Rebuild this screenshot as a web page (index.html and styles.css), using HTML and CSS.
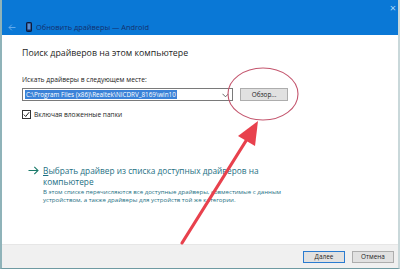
FILE: index.html
```html
<!DOCTYPE html>
<html lang="ru">
<head>
    <meta charset="UTF-8">
    <meta name="viewport" content="width=device-width, initial-scale=1.0">
    <title>Обновить драйверы — Android</title>
    <link rel="stylesheet" href="styles.css">
</head>
<body>
    <div class="window">
        <div class="titlebar">
            <svg class="back-arrow" width="8" height="7" viewBox="0 0 8 7">
                <path d="M7.5 3.5 H1 M3.8 0.7 L1 3.5 L3.8 6.3" fill="none" stroke="#6fb1ee" stroke-width="0.9"/>
            </svg>
            <svg class="device-icon" width="6" height="10" viewBox="0 0 6 10">
                <rect x="0.5" y="0.5" width="5" height="9" rx="0.8" fill="#1c2f5e" stroke="#0d1a3a" stroke-width="1"/>
                <rect x="1.5" y="1.5" width="3" height="6" fill="#5c8fd0"/>
            </svg>
            <span class="title-text">Обновить драйверы — Android</span>
            <span class="close-btn">&#215;</span>
        </div>

        <div class="content">
            <h1 class="page-title">Поиск драйверов на этом компьютере</h1>
            <div class="field-label">Искать драйверы в следующем месте:</div>
            <div class="path-row">
                <div class="path-input">
                    <span class="path-text">C:\Program Files (x86)\Realtek\NICDRV_8169\win10</span>
                    <svg class="combo-arrow" width="7" height="5" viewBox="0 0 7 5">
                        <path d="M0.5 0.8 L3.5 3.8 L6.5 0.8" fill="none" stroke="#555" stroke-width="0.9"/>
                    </svg>
                </div>
                <button class="btn browse-btn">Обзор...</button>
            </div>
            <label class="check-row">
                <span class="checkbox">
                    <svg width="7" height="7" viewBox="0 0 7 7">
                        <path d="M0.8 3.6 L2.7 5.5 L6.2 1.2" fill="none" stroke="#222" stroke-width="1"/>
                    </svg>
                </span>
                Включая вложенные папки
            </label>

            <div class="command-link">
                <svg class="link-arrow" width="11" height="9" viewBox="0 0 11 9">
                    <path d="M0.5 4.5 H10 M6.3 0.8 L10 4.5 L6.3 8.2" fill="none" stroke="#1b7a6a" stroke-width="1.1"/>
                </svg>
                <div class="link-body">
                    <div class="link-title"><u>В</u>ыбрать драйвер из списка доступных драйверов на компьютере</div>
                    <div class="link-desc">В этом списке перечисляются все доступные драйверы, совместимые с данным устройством, а также драйверы для устройств той же категории.</div>
                </div>
            </div>
        </div>

        <div class="footer">
            <button class="btn default-btn"><u>Д</u>алее</button>
            <button class="btn">Отмена</button>
        </div>

        <svg class="annotation" width="400" height="269" viewBox="0 0 400 269">
            <ellipse cx="263" cy="94" rx="35" ry="26" fill="none" stroke="#c4566e" stroke-width="1.1"/>
            <line x1="182" y1="243" x2="249" y2="136" stroke="#e8414d" stroke-width="3.2" stroke-linecap="round"/>
            <polygon points="258,121 238,136 255,146" fill="#e8414d"/>
        </svg>
    </div>
</body>
</html>
```

FILE: styles.css
```css
* {
    box-sizing: border-box;
}

body {
    margin: 0;
    font-family: "Open Sans", "Noto Sans", Arial, sans-serif;
    background: #fff;
}

.window {
    position: relative;
    width: 400px;
    height: 269px;
    display: flex;
    flex-direction: column;
    border-left: 2px solid #8fb3b9;
    border-right: 2px solid #c9d8da;
    border-bottom: 1px solid #6f9aa2;
    overflow: hidden;
}

.titlebar {
    height: 35px;
    background: #0a78d6;
    display: flex;
    align-items: center;
    padding: 19px 6px 0 6px;
    margin: 0 -2px 0 -2px;
    position: relative;
}

.back-arrow {
    margin-left: 2px;
    margin-right: 8px;
}

.device-icon {
    margin-left: 2px;
    margin-right: 4px;
}

.title-text {
    color: #13306e;
    font-size: 7.4px;
}

.close-btn {
    position: absolute;
    right: 4px;
    top: 0;
    color: #a9d6f7;
    font-size: 11px;
    line-height: 16px;
}

.content {
    flex: 1;
    padding: 11px 0 0 20px;
}

.page-title {
    margin: 0;
    font-size: 8.8px;
    font-weight: normal;
    line-height: 14px;
    color: #1e1e1e;
}

.field-label {
    margin-top: 15px;
    font-size: 6.7px;
    line-height: 10px;
    color: #222;
}

.path-row {
    display: flex;
    align-items: center;
    margin-top: 3px;
    gap: 7px;
}

.path-input {
    width: 211px;
    height: 13px;
    border: 1px solid #7a7a7a;
    display: flex;
    align-items: center;
    justify-content: space-between;
    padding: 0 3px 0 2px;
    background: #fff;
}

.path-text {
    background: #3b82d8;
    color: #fff;
    font-size: 6.3px;
    line-height: 9px;
    padding: 0 1px;
    white-space: nowrap;
}

.combo-arrow {
    margin-top: 1px;
}

.btn {
    font-family: inherit;
    font-size: 6.4px;
    color: #222;
    background: #e1e1e1;
    border: 1px solid #adadad;
    height: 12px;
    padding: 0;
    line-height: 10px;
    width: 42px;
}

.browse-btn {
    width: 48px;
    height: 13px;
}

.check-row {
    display: flex;
    align-items: center;
    margin-top: 9px;
    font-size: 6.6px;
    line-height: 9px;
    color: #222;
    gap: 3px;
}

.checkbox {
    width: 9px;
    height: 9px;
    border: 1px solid #333;
    display: flex;
    align-items: center;
    justify-content: center;
    background: #fff;
}

.command-link {
    display: flex;
    align-items: flex-start;
    margin-top: 46px;
    padding-left: 6px;
    gap: 4px;
}

.link-arrow {
    margin-top: 1px;
}

.link-title {
    color: #1d6f83;
    font-size: 8.3px;
    line-height: 11px;
    width: 228px;
}

.link-desc {
    color: #1d6f83;
    font-size: 6.1px;
    line-height: 8px;
    margin-top: 1px;
    width: 240px;
}

.footer {
    height: 24px;
    background: #f0f0f0;
    border-top: 1px solid #e6e6e6;
    display: flex;
    justify-content: flex-end;
    align-items: center;
    gap: 7px;
    padding-right: 4px;
}

.default-btn {
    border: 1px solid #2a7bd0;
}

.annotation {
    position: absolute;
    left: -2px;
    top: 0;
    pointer-events: none;
}
```
